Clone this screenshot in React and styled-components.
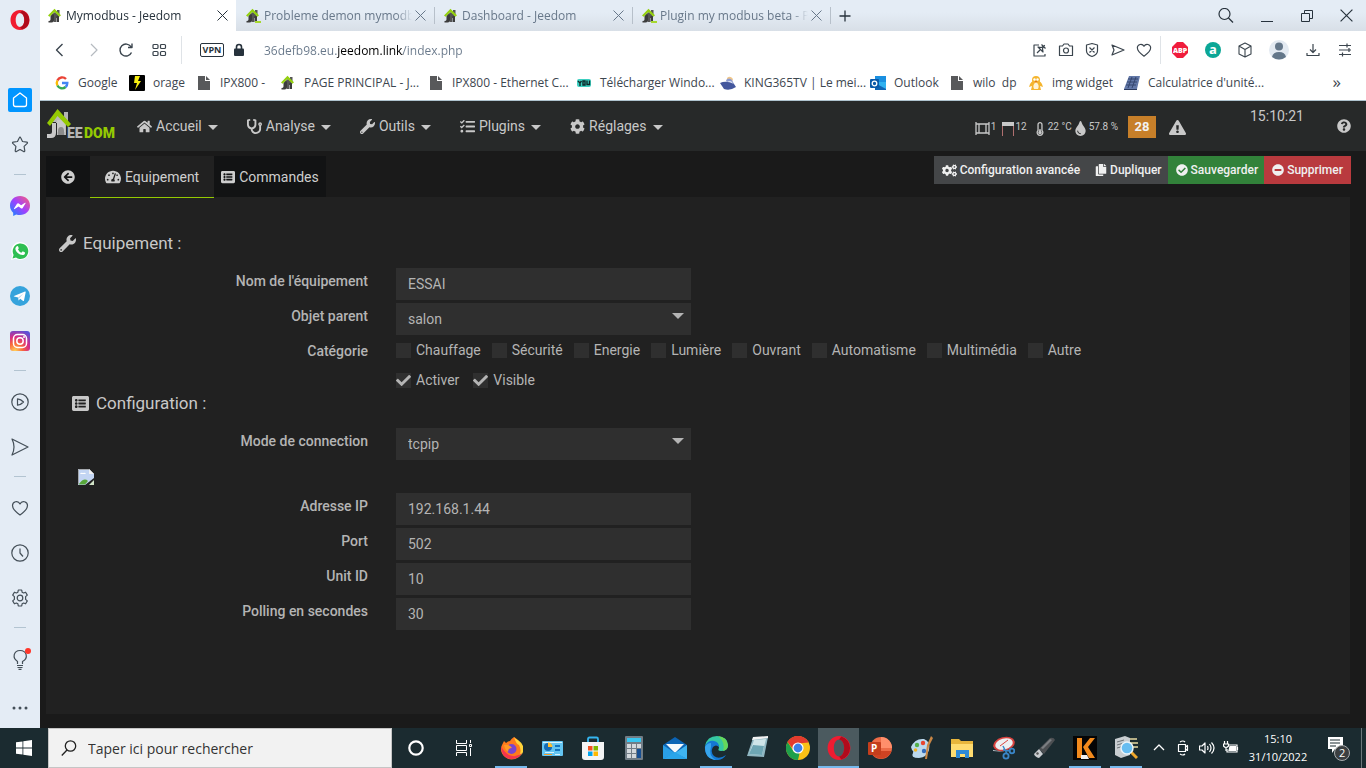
import React, { useState } from "react";
import styled, { createGlobalStyle } from "styled-components";
import {
  FaArrowCircleLeft,
  FaCheck,
  FaCheckCircle,
  FaCog,
  FaCogs,
  FaCopy,
  FaExclamationTriangle,
  FaHome,
  FaListAlt,
  FaMinusCircle,
  FaQuestionCircle,
  FaStethoscope,
  FaTachometerAlt,
  FaTasks,
  FaThermometerQuarter,
  FaTint,
  FaWrench,
} from "react-icons/fa";

const GlobalStyle = createGlobalStyle`
  * {
    box-sizing: border-box;
  }

  body {
    margin: 0;
    font-family: "Open Sans", "Noto Sans", sans-serif;
    font-size: 12px;
  }

  button, input, select {
    margin: 0;
    padding: 0;
    border: none;
    border-radius: 0;
    background: none;
    font: inherit;
    color: inherit;
  }

  button:focus, input:focus, select:focus {
    outline: none;
  }

  a {
    color: inherit;
    text-decoration: none;
  }

  svg {
    display: block;
    flex: none;
  }
`;

const StyledDesktop = styled.div`
  display: flex;
  flex-direction: column;
  min-height: 100vh;
`;

const StyledBrowser = styled.div`
  display: flex;
  flex: 1;
`;

const StyledWindow = styled.div`
  display: flex;
  flex-direction: column;
  flex: 1;
  min-width: 0;
`;

/* Opera sidebar */

const StyledSidebar = styled.aside`
  display: flex;
  flex-direction: column;
  width: 40px;
  background: #e4ecf5;
  color: #444f58;
`;

const StyledSideButton = styled.button`
  display: flex;
  align-items: center;
  justify-content: center;
  height: ${({ $tall }) => ($tall ? "77px" : "45px")};
  padding-bottom: ${({ $tall }) => ($tall ? "37px" : "0")};
`;

const StyledSideLine = styled.div`
  height: 16px;
  padding: 7px 14px 8px;

  &::before {
    content: "";
    display: block;
    height: 1px;
    background: #b3c4d1;
  }
`;

const StyledSideMore = styled.button`
  display: flex;
  align-items: center;
  justify-content: center;
  height: 40px;
  margin-top: auto;
`;

/* Opera tabs and bars */

const StyledTabStrip = styled.div`
  display: flex;
  height: 31px;
  background: linear-gradient(#e4ecf5 40%, #d8dfe7);
  color: #68788a;
`;

const StyledTab = styled.div`
  display: flex;
  align-items: center;
  gap: 3px;
  width: ${({ $active }) => ($active ? "196px" : "198px")};
  padding: 0 8px 0 ${({ $active }) => ($active ? "7px" : "9px")};
  background: ${({ $active }) => ($active ? "white" : "none")};
  color: ${({ $active }) => ($active ? "#27323c" : "#68788a")};
`;

const StyledTabTitle = styled.span`
  flex: 1;
  overflow: hidden;
  white-space: nowrap;
  line-height: 18px;
  mask-image: linear-gradient(to left, transparent, black 16px);
`;

const StyledTabLine = styled.span`
  width: 1px;
  height: 17px;
  margin: 7px -1px 0 0;
  background: #b7c0ca;
`;

const StyledPlus = styled.button`
  display: flex;
  align-items: center;
  padding: 0 9px;
  color: #27323c;
`;

const StyledWindowButtons = styled.div`
  display: flex;
  align-items: center;
  gap: 26px;
  margin-left: auto;
  padding-right: 13px;
  color: #27323c;
`;

const StyledIconButton = styled.button`
  display: flex;
  align-items: center;
  justify-content: center;
`;

const StyledAddressBar = styled.div`
  display: flex;
  align-items: center;
  height: 38px;
  padding: 0 13px 0 12px;
  background: white;
  color: #3b454e;
`;

const StyledButtonGroup = styled.div`
  display: flex;
  align-items: center;
  gap: ${({ $gap }) => $gap}px;
`;

const StyledBarLine = styled.span`
  width: 1px;
  height: 28px;
  margin: 0 ${({ $right }) => $right}px 0 ${({ $left }) => $left}px;
  background: #dfe3e7;
`;

const StyledVpn = styled.button`
  width: 24px;
  height: 14px;
  margin-right: 9px;
  border: 1px solid #27323c;
  border-radius: 2px;
  font-size: 9px;
  font-weight: 700;
  line-height: 12px;
  color: #27323c;
`;

/* the host name is darker than the rest of the address */
const StyledAddress = styled.input`
  flex: 1;
  min-width: 0;
  height: 24px;
  margin-left: 19px;
  color: transparent;
  background: linear-gradient(
    to right,
    #68788a 73px,
    #000 73px,
    #000 139px,
    #68788a 139px
  );
  background-clip: text;
`;

const StyledBookmarks = styled.nav`
  display: flex;
  align-items: center;
  height: 31px;
  padding: 0 25px 3px 14px;
  background: white;
  color: #3d464f;
`;

const StyledBookmark = styled.a`
  display: flex;
  align-items: center;
  gap: 8px;
  margin-right: 12px;
  white-space: pre;
`;

const StyledBookmarkLabel = styled.span`
  width: ${({ $width }) => $width}px;
  line-height: 18px;
`;

const StyledMore = styled.button`
  margin-left: auto;
  padding-bottom: 3px;
  font-size: 17px;
  line-height: 18px;
`;

/* Jeedom page */

const StyledPage = styled.main`
  display: flex;
  flex-direction: column;
  flex: 1;
  border-top: 1px solid #afc3ce;
  background: #1a1a1a;
  font-family: Roboto, sans-serif;
  font-size: 14px;
  color: #b4b4b4;
`;

const StyledNavbar = styled.header`
  display: flex;
  height: 50px;
  padding: 0 15px 0 7px;
  background: #272929;
  color: #c8c8c8;
`;

const StyledLogo = styled.a`
  padding-top: 7px;
  margin-right: 21px;
`;

const StyledMenu = styled.nav`
  display: flex;
  align-items: center;
  gap: 29px;
`;

const StyledMenuButton = styled.button`
  display: flex;
  align-items: center;
  gap: 4px;
  line-height: 20px;

  &::after {
    content: "";
    margin: 3px 0 0 2px;
    border: 5px solid transparent;
    border-top-color: currentColor;
    border-bottom: none;
  }
`;

const StyledStatus = styled.div`
  display: flex;
  align-items: center;
  margin-left: auto;
  padding-top: 2px;
`;

const StyledSensor = styled.span`
  display: flex;
  align-items: center;
  gap: 1px;
  margin: 3px ${({ $right }) => $right}px 0 0;
  font-size: 10px;
  line-height: 12px;

  span {
    margin-bottom: 4px;
  }
`;

const StyledBadge = styled.span`
  width: 28px;
  margin-right: 13px;
  background: #c77f29;
  color: #f2f2f2;
  font-size: 13px;
  font-weight: 700;
  line-height: 22px;
  text-align: center;
`;

const StyledClock = styled.time`
  margin: 5px 33px 0 64px;
  line-height: 20px;
`;

const StyledHelp = styled.button`
  display: flex;
  align-items: center;
`;

/* one pixel of the active tab's border runs over the panel */
const StyledTabsRow = styled.div`
  z-index: 1;
  display: flex;
  justify-content: space-between;
  align-items: flex-start;
  height: 46px;
  padding: 5px 15px 0 6px;
`;

const StyledPageTabs = styled.div`
  display: flex;
  align-items: flex-start;
`;

const StyledPageTab = styled.button`
  display: flex;
  align-items: center;
  gap: 4px;
  height: ${({ $active }) => ($active ? "42px" : "41px")};
  padding: 0 ${({ $wide }) => ($wide ? "15px" : "7px")};
  border-bottom: ${({ $active }) => ($active ? "1px solid #94ca02" : "none")};
  background: ${({ $active }) => ($active ? "#212121" : "#121314")};
  color: #cecece;
  line-height: 20px;
`;

const StyledActions = styled.div`
  display: flex;
`;

const buttonColors = {
  default: "#444648",
  success: "#32823a",
  danger: "#b93a3e",
};

const StyledActionButton = styled.button`
  display: flex;
  align-items: center;
  gap: 3px;
  height: 28px;
  padding: 0 ${({ $right }) => $right}px 0 8px;
  background: ${({ $kind }) => buttonColors[$kind]};
  color: #f0f0f0;
  font-size: 12px;
  font-weight: 500;
`;

const StyledPanel = styled.form`
  flex: 1;
  margin: 0 16px 14px 6px;
  padding: 35px 0 24px;
  background: #212121;
`;

const StyledTitle = styled.h2`
  display: flex;
  align-items: center;
  gap: 7px;
  margin: 0 0 14px ${({ $indent }) => ($indent ? "26px" : "13px")};
  color: #c8c8c8;
  font-size: 17px;
  font-weight: 400;
  line-height: 22px;
`;

const StyledRow = styled.div`
  display: grid;
  grid-template-columns: calc(25% - 4px) ${({ $wide }) =>
      $wide ? "1fr" : "calc(25% - 31px)"};
  column-gap: 28px;
  margin-bottom: 3px;
`;

const StyledLabel = styled.label`
  padding-top: 4px;
  font-weight: 500;
  line-height: 18px;
  text-align: right;
`;

const StyledInput = styled.input`
  width: 100%;
  height: 32px;
  padding: 0 12px;
  background: #2f2f2f;
`;

const StyledSelectBox = styled.div`
  position: relative;

  &::after {
    content: "";
    position: absolute;
    top: 10px;
    right: 7px;
    border: 6px solid transparent;
    border-top-color: #b4b4b4;
    border-bottom: none;
    pointer-events: none;
  }
`;

const StyledSelect = styled.select`
  width: 100%;
  height: 32px;
  padding: 0 12px;
  appearance: none;
  background: #2f2f2f;
`;

const StyledChecks = styled.div`
  display: flex;
  flex-wrap: wrap;
  align-items: center;
  gap: ${({ $gap }) => $gap}px;
  min-height: 24px;
  margin-bottom: ${({ $last }) => ($last ? "-3px" : "3px")};
`;

const StyledCheckLabel = styled.label`
  display: flex;
  align-items: center;
  gap: 5px;
  line-height: 20px;
`;

const StyledCheckBox = styled.span`
  display: grid;
  width: 15px;
  height: 15px;
  background: #2f2f2f;

  > * {
    grid-area: 1 / 1;
  }

  svg {
    pointer-events: none;
  }
`;

const StyledCheck = styled.input`
  width: 15px;
  height: 15px;
  appearance: none;
`;

const StyledPicture = styled.div`
  padding: 6px 0 8px 32px;
`;

/* Windows taskbar */

const StyledTaskbar = styled.footer`
  display: flex;
  height: 40px;
  background: #1b2b30;
  color: white;
`;

const StyledStart = styled.button`
  display: flex;
  align-items: center;
  justify-content: center;
  width: 48px;
`;

const StyledSearch = styled.label`
  display: flex;
  flex: none;
  align-items: center;
  gap: 11px;
  width: 344px;
  padding-left: 12px;
  border: 1px solid #c5c5c5;
  background: #f2f2f2;
  color: #222;
`;

const StyledSearchInput = styled.input`
  flex: 1;
  min-width: 0;
  font-size: 14px;

  &::placeholder {
    color: #333;
    opacity: 1;
  }
`;

const StyledApps = styled.div`
  display: flex;
  margin-left: 2px;
`;

const StyledApp = styled.button`
  display: flex;
  flex: none;
  flex-direction: column;
  align-items: center;
  justify-content: space-between;
  width: ${({ $wide }) => ($wide ? "48px" : "41px")};
  padding-top: 8px;
  background: ${({ $active }) => ($active ? "#4b5a5f" : "none")};

  &::after {
    content: "";
    width: ${({ $active }) => ($active ? "100%" : "32px")};
    height: 2px;
    background: ${({ $open }) => ($open ? "#76b9ed" : "none")};
  }
`;

const StyledTray = styled.div`
  display: flex;
  align-items: center;
  gap: 8px;
  margin-left: auto;
`;

const StyledDate = styled.div`
  width: 62px;
  font-size: 11px;
  line-height: 18px;
  text-align: center;
  white-space: nowrap;
`;

const StyledNotifications = styled.button`
  margin: 2px 0 0 10px;
`;

const StyledDesktopEdge = styled.div`
  align-self: stretch;
  width: 5px;
  border-left: 1px solid #6c777b;
`;

const Line = ({ size = 18, box = 18, width = 1, children }) => (
  <svg
    width={size}
    height={size}
    viewBox={`0 0 ${box} ${box}`}
    fill="none"
    stroke="currentColor"
    strokeWidth={width}
    strokeLinejoin="round"
  >
    {children}
  </svg>
);

const House = ({ forum }) => (
  <svg width="16" height="16" viewBox="0 0 16 16">
    <path d="M10 2h2.500v5H10zM4.500 6.500 8 4l3.500 3v3H9v4H7z" fill="#555" />
    <path d="M5 6.500h2V12q0 2.500-2.500 2.500H1.500V13q2 0 2-1.500V8zM9.500 8h2.500v6H9.500z" fill="#3c3c3c" />
    <path d="M1 7.500 7.500.8l6.500 6.400-1.600 1.500L7.500 4 2.600 8.800z" fill="#94d010" />
    {forum && <path d="M10 13h6v2h-6z" fill="#a6d82e" />}
  </svg>
);

const Close = ({ size = 11 }) => (
  <Line size={size} box={11}>
    <path d="m.5.5 10 10m0-10-10 10" />
  </Line>
);

const OperaLogo = ({ size = 20 }) => (
  <svg width={size} height={size} viewBox="0 0 20 20">
    <path
      d="M10 0C4.600 0 .5 4.200.5 10S4.600 20 10 20s9.500-4.200 9.500-10S15.400 0 10 0zm0 3c2.500 0 4.300 3 4.300 7s-1.800 7-4.300 7-4.300-3-4.300-7S7.500 3 10 3z"
      fill="#f01c31"
      fillRule="evenodd"
    />
    <path d="M12 .4A10 10 0 0 1 12 19.600L10 17c2.500 0 4.300-3 4.300-7S12.500 3 10 3z" fill="#b00b1c" />
  </svg>
);

const FileIcon = () => (
  <svg width="16" height="16" viewBox="0 0 16 16" fill="#58595b">
    <path d="M2 1h7v5h5v9H2zM10 1l4 4h-4z" />
  </svg>
);

const HeartPath = () => (
  <path d="M9 16C4 12.500 1.500 10 1.500 6.600 1.500 2.500 7 1 9 4.900c2-3.900 7.500-2.400 7.500 1.700C16.500 10 14 12.500 9 16z" />
);

const GearPath = () => (
  <>
    <path d="M7.300 1h3.400l.4 2.200 1.500.8 2-.8 1.700 2.900-1.700 1.500v2.800l1.700 1.500-1.700 2.900-2-.8-1.500.8-.4 2.200H7.300l-.4-2.200-1.500-.8-2 .8-1.700-2.900 1.700-1.500V7.600L1.700 6.100l1.700-2.900 2 .8 1.500-.8z" />
    <circle cx="9" cy="9" r="2.800" />
  </>
);

const Logo = () => (
  <svg width="69" height="34" viewBox="0 0 69 34">
    <path d="M17 4h4v9h-4z" fill="#b5b5b5" />
    <path d="M3 14 11 6l8 8v13H9V14z" fill="#b9b9b9" />
    <path d="M10 12h8v12h-8z" fill="#c8c8c8" />
    <path d="M11 23q0-4 3-4t3 4v4h-6z" fill="#8b8b8b" />
    <path d="M5 15h4v10q0 5-5 5H0v-4h3q2 0 2-2z" fill="#c8c8c8" />
    <path d="M9 15h1v12H9zM4 14h5v1H4z" fill="#272929" />
    <path d="M0 15 10.500 1 24 16l-3 3L10.500 8 3 18z" fill="#94ca02" />
    <g fontFamily="Roboto" fontWeight="900" fontSize="14">
      <text x="20" y="30" fill="#b5b5b5">EE</text>
      <text x="37" y="30" fill="#94ca02">DOM</text>
    </g>
  </svg>
);

const Messenger = () => (
  <svg width="20" height="20" viewBox="0 0 20 20">
    <defs>
      <linearGradient id="messenger" x1="0" y1="1" x2="1" y2="0">
        <stop offset="0" stopColor="#0a8cff" />
        <stop offset=".5" stopColor="#a040ff" />
        <stop offset="1" stopColor="#ff6070" />
      </linearGradient>
    </defs>
    <path d="M10 0C4.400 0 0 4.100 0 9.600c0 3 1.200 5.400 3.200 7.100V20l3-1.600c1.200.5 2.500.6 3.800.6 5.600 0 10-4 10-9.500S15.600 0 10 0z" fill="url(#messenger)" />
    <path d="m4 12.500 3-4.700q.8-1 1.800-.3l2.300 1.700 3.900-2.400q1-.3.6.5l-2.900 4.600q-.8 1-1.800.3L8.600 10.500l-3.900 2.600q-.9.200-.7-.6z" fill="white" />
  </svg>
);

const WhatsApp = () => (
  <svg width="20" height="20" viewBox="0 0 20 20">
    <path d="m1 19 1.300-4.700A9 9 0 1 1 5.700 17.800z" fill="white" />
    <path d="m2.500 17.500 1.100-3.600A7.800 7.800 0 1 1 6 16.600z" fill="#2fbf52" />
    <path d="M7 5.200c.6-.3 1 0 1.100.4l.6 1.500q.1.400-.7 1.300 1.200 2.400 3.400 3.300l1-1.100q.3-.3.7-.1l1.600.8c.7.4.1 2-.7 2.400C10.600 15.200 5 10.800 5.400 7.400c.1-.9.8-1.900 1.600-2.200z" fill="white" />
  </svg>
);

const Telegram = () => (
  <svg width="20" height="20" viewBox="0 0 20 20">
    <circle cx="10" cy="10" r="10" fill="#35a3dc" />
    <path d="M4 9.900 15 5.500q.9-.2.700.8L14 14.400q-.3 1-1.200.4l-2.600-2-1.600 1.600-.5-3L4 10.500q-.5-.3 0-.6z" fill="white" />
    <path d="m8 11.500 5.500-4-4.500 5-.4 1.900z" fill="#b8d8ee" />
  </svg>
);

const Instagram = () => (
  <svg width="20" height="20" viewBox="0 0 20 20">
    <defs>
      <radialGradient id="instagram" cx=".25" cy="1" r="1.100">
        <stop offset="0" stopColor="#ffd35a" />
        <stop offset=".35" stopColor="#f9673b" />
        <stop offset=".65" stopColor="#d62c86" />
        <stop offset="1" stopColor="#5b51d8" />
      </radialGradient>
    </defs>
    <rect width="20" height="20" rx="3" fill="url(#instagram)" />
    <rect x="3.500" y="3.500" width="13" height="13" rx="4" fill="none" stroke="white" strokeWidth="1.500" />
    <circle cx="10" cy="10" r="3.200" fill="none" stroke="white" strokeWidth="1.500" />
    <circle cx="14" cy="6" r="1" fill="white" />
  </svg>
);

const sideItems = [
  {
    name: "Speed Dial",
    icon: (
      <svg width="24" height="24" viewBox="0 0 24 24">
        <rect width="24" height="24" rx="2" fill="#0095ff" />
        <path d="m12 5 6.500 5v6.500q0 2-2 2h-9q-2 0-2-2V10z" fill="none" stroke="white" strokeWidth="1.300" strokeLinejoin="round" />
      </svg>
    ),
  },
  {
    name: "Favoris",
    icon: (
      <Line width={1.2}>
        <path d="M9 1.200q.5 0 .8.700l1.700 3.600 4.300.6q1.200.3.400 1.300l-3.100 3 .7 4.400q0 1.200-1.200.8L9 13.500l-3.600 2.100q-1.200.4-1.200-.8l.7-4.400-3.100-3q-.8-1 .4-1.300l4.300-.6 1.700-3.600q.3-.7.800-.7z" />
      </Line>
    ),
  },
  null,
  { name: "Messenger", icon: <Messenger /> },
  { name: "WhatsApp", icon: <WhatsApp /> },
  { name: "Telegram", icon: <Telegram /> },
  { name: "Instagram", icon: <Instagram /> },
  null,
  {
    name: "Lecteur",
    icon: (
      <Line width={1.2}>
        <circle cx="9" cy="9" r="8.200" />
        <path d="M6.500 5.800v6.400q3.500-.5 6-3.200-2.500-2.700-6-3.200z" />
      </Line>
    ),
  },
  {
    name: "Mon Flow",
    icon: (
      <Line width={1.2}>
        <path d="m1 1 16 8-16 8q4-8 0-16z" />
      </Line>
    ),
  },
  null,
  { name: "Signets", icon: <Line width={1.2}><HeartPath /></Line> },
  {
    name: "Historique",
    icon: (
      <Line width={1.2}>
        <circle cx="9" cy="9" r="8.200" />
        <path d="M9 4.500V9l3 3.500" />
      </Line>
    ),
  },
  { name: "Paramètres", icon: <Line width={1.2}><GearPath /></Line> },
  null,
  {
    name: "Conseils",
    icon: (
      <svg width="22" height="22" viewBox="0 0 22 22" fill="none" stroke="#444f58" strokeWidth="1.200">
        <path d="M8.500 16v-2.500C3 10 4.500 2.600 11 2.500s9 7.500 2.500 11V16M8 17.500h6M8.500 19.500h5M9.500 21.300h3" />
        <circle cx="19" cy="3" r="3" fill="#ff3528" stroke="none" />
      </svg>
    ),
  },
];

const openTabs = [
  { title: "Mymodbus - Jeedom", active: true },
  { title: "Probleme demon mymodbus", forum: true },
  { title: "Dashboard - Jeedom" },
  { title: "Plugin my modbus beta - Plugins", forum: true },
];

const bookmarks = [
  {
    name: "Google",
    width: 39,
    icon: (
      <svg width="16" height="16" viewBox="0 0 16 16" fill="none" strokeWidth="2.400">
        <path d="M12 4A5.300 5.300 0 0 0 3.400 5.500" stroke="#ea4335" />
        <path d="M3.400 5.500a5.300 5.300 0 0 0 0 5" stroke="#fbbc05" />
        <path d="M3.400 10.500a5.300 5.300 0 0 0 8.200 1.500" stroke="#34a853" />
        <path d="M8 8h5.300a5.300 5.300 0 0 1-1.700 4" stroke="#4285f4" />
      </svg>
    ),
  },
  {
    name: "orage",
    width: 31,
    icon: (
      <svg width="16" height="16" viewBox="0 0 16 16">
        <rect width="16" height="16" rx="1" fill="black" />
        <path d="M6 1h5L9 6h3l-6 9 2-7H5z" fill="#f7ee12" />
      </svg>
    ),
  },
  { name: "IPX800 -", width: 48, icon: <FileIcon /> },
  { name: "PAGE PRINCIPAL - J...", width: 112, icon: <House /> },
  { name: "IPX800 - Ethernet C...", width: 112, icon: <FileIcon /> },
  {
    name: "Télécharger Windo...",
    width: 108,
    icon: (
      <svg width="16" height="16" viewBox="0 0 16 16">
        <rect x="1" y="4" width="14" height="8" rx="2" fill="#3dcfc0" />
        <path d="m2 6 2 2 1.500-2M4 8v3M7 6h2v4H7zM11 5.500v4h2.500v-4" fill="none" stroke="#102a2a" strokeWidth="1.400" />
      </svg>
    ),
  },
  {
    name: "KING365TV | Le mei...",
    width: 114,
    icon: (
      <svg width="16" height="16" viewBox="0 0 16 16">
        <path d="M7 3q3-3 6 1l-1 3H7z" fill="#eec58a" />
        <path d="M6 5q3-3 6 0l2 4-6 2z" fill="#8d9bd0" />
        <path d="M7 7q3-2 5 0l1 2-5 1z" fill="#dfe4f4" />
        <path d="M0 8q6-3 14 1l2 3q-6 4-12 2z" fill="#44579d" />
      </svg>
    ),
  },
  {
    name: "Outlook",
    width: 43,
    icon: (
      <svg width="16" height="16" viewBox="0 0 16 16">
        <path d="M5 1h11v8H5z" fill="#1a8fe0" />
        <path d="M5 7h11v8H5z" fill="#2fb1f0" />
        <path d="m5 8 11 6v1H5z" fill="#0f64b4" />
        <rect y="4" width="9" height="9" rx="1" fill="#0b59a8" />
        <circle cx="4.500" cy="8.500" r="2.300" fill="none" stroke="white" strokeWidth="1.300" />
      </svg>
    ),
  },
  { name: "wilo  dp", width: 43, icon: <FileIcon /> },
  {
    name: "img widget",
    width: 60,
    icon: (
      <svg width="16" height="16" viewBox="0 0 16 16">
        <circle cx="8" cy="5" r="4" fill="#f5b52e" />
        <path d="M8 5q6 1 7 7l-3-1 1 4H3l1-4-3 1q1-6 7-7z" fill="#f5b52e" />
        <path d="M8 7q4 3 2 7H6q-2-4 2-7z" fill="#fff3d4" />
        <circle cx="6.500" cy="4.500" r="1.200" fill="white" />
        <circle cx="9.500" cy="4.500" r="1.200" fill="white" />
        <path d="M6.500 6h3L8 8z" fill="#e0761a" />
      </svg>
    ),
  },
  {
    name: "Calculatrice d'unité...",
    width: 110,
    icon: (
      <svg width="16" height="16" viewBox="0 0 16 16">
        <path d="M5 1h11l-3 13H0z" fill="#6278a8" />
        <path d="M0 14h13v1H0z" fill="#2b3a5e" />
        <path d="M4 4h10M3 7h10M2 10h10M8 2 4 13M12 2 8 13" stroke="#35466f" />
      </svg>
    ),
  },
];

const menuItems = [
  { name: "Accueil", Icon: FaHome },
  { name: "Analyse", Icon: FaStethoscope },
  { name: "Outils", Icon: FaWrench },
  { name: "Plugins", Icon: FaTasks },
  { name: "Réglages", Icon: FaCog },
];

const categories = [
  "Chauffage",
  "Sécurité",
  "Energie",
  "Lumière",
  "Ouvrant",
  "Automatisme",
  "Multimédia",
  "Autre",
];

const tcpFields = [
  { id: "ip", label: "Adresse IP", value: "192.168.1.44" },
  { id: "port", label: "Port", value: "502" },
  { id: "unit", label: "Unit ID", value: "10" },
  { id: "polling", label: "Polling en secondes", value: "30" },
];

const apps = [
  {
    name: "Firefox",
    open: true,
    icon: (
      <>
        <path d="M15 1q5 3 5.500 7Q26 15 20 21q-8 5-14 0-7-6-2-14l1-2 2 2q2-2 4-2 1-2 4-4z" fill="#ff7a1c" />
        <path d="M15 1q2 7 5 8 4 8-2 12 8-2 6-11-2-4-5-6-3-1-4-3z" fill="#ffd43a" />
        <path d="M2 10q0 12 10 13 8 0 11-6-6 5-13 2-5-3-8-9z" fill="#f4344e" />
        <circle cx="12.500" cy="13" r="5" fill="#7a45cf" />
        <path d="M5 9q5-1 8 3-4 0-4 4-3-2-4-7z" fill="#ff9a26" />
      </>
    ),
  },
  {
    name: "Panneau de configuration",
    icon: (
      <>
        <rect x="2" y="5" width="21" height="15" rx="1" fill="#63c5f2" />
        <path d="M3 6h19v1H3zM5 16h9v1H5zM15 18h5v1h-5z" fill="#d9f2fd" />
        <circle cx="8" cy="11" r="4" fill="#156bb3" />
        <path d="M8 11V6.500A4.500 4.500 0 0 1 12.500 11z" fill="#ffbe2e" />
        <path d="M15 9h5v2h-5zM15 13h5v2h-5z" fill="#1273bd" />
        <path d="M4 18h8v1H4z" fill="#f39a26" />
      </>
    ),
  },
  {
    name: "Microsoft Store",
    icon: (
      <>
        <path d="M7 7V3q0-1.500 1.500-1.500h7Q17 1.500 17 3v4" fill="none" stroke="#35b5ef" strokeWidth="1.800" />
        <path d="M1 6h22v15q0 3-3 3H4q-3 0-3-3z" fill="#f4f4f4" />
        <path d="M7 10h4.500v4.500H7z" fill="#f25022" />
        <path d="M12.500 10H17v4.500h-4.500z" fill="#7fba00" />
        <path d="M7 15.500h4.500V20H7z" fill="#00a4ef" />
        <path d="M12.500 15.500H17V20h-4.500z" fill="#ffb900" />
      </>
    ),
  },
  {
    name: "Calculatrice",
    icon: (
      <>
        <rect x="3" width="18" height="24" rx="1" fill="#717d86" />
        <path d="M5 2h14v4H5z" fill="#39c6f0" />
        <path d="M5 8h4v4H5zM10 8h4v4h-4zM15 8h4v4h-4zM5 13h4v4H5zM10 13h4v4h-4zM5 18h4v4H5zM10 18h4v4h-4z" fill="#d3d8dc" />
        <path d="M15 13h4v9h-4z" fill="#174f91" />
      </>
    ),
  },
  {
    name: "Courrier",
    icon: (
      <>
        <path d="M0 9 12 1l12 8v14H0z" fill="#0b64b5" />
        <path d="M3 8h18l-9 9z" fill="#f4f8fb" />
        <path d="m0 9 12 8-12 6z" fill="#2a9fe6" />
        <path d="m24 9-12 8 12 6z" fill="#3fb4f0" />
        <path d="m0 23 12-7 12 7z" fill="#2aa5ea" />
      </>
    ),
  },
  {
    name: "Edge",
    open: true,
    icon: (
      <>
        <path d="M1 10Q3 0 13 0q11 1 11 9 0 6-7 6-4 0-2-3 0-5-6-5-5 0-8 3z" fill="#35c7a2" />
        <path d="M1 10Q4 4 10 5q5 1 5 6-3-3-6 0-3 5 1 9 5 4 12-1-4 6-12 5Q0 21 1 10z" fill="#1478d4" />
        <path d="M7 11Q4 20 12 24 1 23 1 11q2-4 6-4z" fill="#37a5ec" />
        <path d="M14 0q9 1 10 9 0 5-5 6 3-8-5-15z" fill="#66d85b" />
      </>
    ),
  },
  {
    name: "Bloc-notes",
    icon: (
      <>
        <path d="m8 2 15-1-4 20-17-1z" fill="#8fb6c1" />
        <path d="m9 4 12-1-4 16-13-1z" fill="#cfe5e9" />
        <path d="M8 9 4 18l13 1 2-9z" fill="#6ea6b4" />
        <path d="m8 1 15-1v2L7 4z" fill="#f2f2f2" />
      </>
    ),
  },
  {
    name: "Chrome",
    icon: (
      <>
        <circle cx="12" cy="12" r="12" fill="#fbc116" />
        <path d="M1.600 6A12 12 0 0 1 22.400 6L12 8z" fill="#e33b2e" />
        <path d="M1.600 6 8 16l5.500 1.500L12 24A12 12 0 0 1 1.600 6z" fill="#1fa04b" />
        <path d="M1.600 6A12 12 0 0 1 22.400 6.500H12L7 13z" fill="#e33b2e" />
        <circle cx="12" cy="12" r="5.600" fill="white" />
        <circle cx="12" cy="12" r="4.400" fill="#3d7fe8" />
      </>
    ),
  },
  { name: "Opera", open: true, active: true },
  {
    name: "PowerPoint",
    icon: (
      <>
        <circle cx="13" cy="12" r="11" fill="#ed6c47" />
        <path d="M13 12V1a11 11 0 0 1 11 11z" fill="#ff8f6b" />
        <path d="M2.500 15h21a11 11 0 0 1-21 0z" fill="#cf4322" />
        <rect y="6" width="13" height="13" rx="1" fill="#c43e1c" />
        <text x="3" y="16" fontFamily="Open Sans" fontSize="10" fontWeight="700" fill="white">P</text>
      </>
    ),
  },
  {
    name: "Paint",
    icon: (
      <>
        <path d="M2 11Q6 2 15 3q7 3 5 11-2 7-10 8-9 0-6-5 1-2-1-3z" fill="#bcd9ee" />
        <circle cx="8" cy="9" r="2.200" fill="#53b04b" />
        <circle cx="14" cy="7" r="2.200" fill="#e8452f" />
        <circle cx="6.500" cy="14" r="1.800" fill="#f0b323" />
        <circle cx="15" cy="15" r="2.200" fill="#3169b8" />
        <path d="m22 0 2 2-4 8-2 13h-2l2-14z" fill="#c98745" />
      </>
    ),
  },
  {
    name: "Explorateur de fichiers",
    icon: (
      <>
        <path d="M1 3h8l2 2h12v16H1z" fill="#e8b63c" />
        <path d="M1 8h22v13H1z" fill="#ffdc70" />
        <path d="M6 14h13v8h-4v-4h-5v4H6z" fill="#2f8ad6" />
      </>
    ),
  },
  {
    name: "Outil Capture",
    icon: (
      <>
        <ellipse cx="13" cy="8" rx="11" ry="7" fill="#d9433f" transform="rotate(-15 13 8)" />
        <ellipse cx="13" cy="8" rx="9" ry="5.500" fill="#eceff1" transform="rotate(-15 13 8)" />
        <path d="m9 10 8-6" stroke="#d9433f" />
        <path d="m2 14 12 2-12-1z" fill="#b9c2c8" />
        <circle cx="15" cy="20" r="2.600" fill="none" stroke="#3a86c8" strokeWidth="1.800" />
        <circle cx="21" cy="15" r="2.300" fill="none" stroke="#3a86c8" strokeWidth="1.800" />
        <path d="m12 10 4 8M12 14l7 1" stroke="#3a86c8" strokeWidth="1.500" />
      </>
    ),
  },
  {
    name: "Clé USB",
    icon: (
      <>
        <path d="M7 13 18 2q4-1 5 2L12 18z" fill="#4c4f52" />
        <path d="m9 12 9-9 2 1-9 9z" fill="#7b7e81" />
        <path d="m2 18 5-5 4 5-4 4q-4-1-5-4z" fill="#c9cccf" />
        <path d="m4 17 2-1 1 2-2 1z" fill="#555" />
      </>
    ),
  },
  {
    name: "K",
    open: true,
    icon: (
      <>
        <path d="M0 0h24v24H0z" fill="#050505" />
        <path d="M4 2h5v20H4z" fill="#f28a1c" />
        <path d="M17 2h5l-7 9 7 11h-6L10 11z" fill="#f28a1c" />
        <path d="M8 19h6l2 4H8z" fill="#f1f1f1" />
      </>
    ),
  },
  {
    name: "Analyse réseau",
    open: true,
    icon: (
      <>
        <path d="m1 3 10-3 5 2v17l-9 3-6-3z" fill="#c8cdd0" />
        <path d="m3 6 7-2M3 9l7-2M3 12l7-2" stroke="#6d7478" />
        <path d="M16 3h7M16 7h8M18 11h6" stroke="#e7dba3" strokeWidth="1.500" />
        <path d="m17 16 6 6" stroke="#efa72c" strokeWidth="3" />
        <circle cx="13" cy="12" r="6" fill="#67bdf0" stroke="#e9f4fa" strokeWidth="1.500" />
      </>
    ),
  },
];

const Sidebar = () => (
  <StyledSidebar>
    <StyledSideButton $tall aria-label="Menu Opera">
      <OperaLogo />
    </StyledSideButton>
    {sideItems.map((item, i) =>
      item ? (
        <StyledSideButton key={i} aria-label={item.name}>
          {item.icon}
        </StyledSideButton>
      ) : (
        <StyledSideLine key={i} />
      )
    )}
    <StyledSideMore aria-label="Plus">
      <svg width="16" height="4" viewBox="0 0 16 4" fill="#444f58">
        <circle cx="2" cy="2" r="1.500" />
        <circle cx="8" cy="2" r="1.500" />
        <circle cx="14" cy="2" r="1.500" />
      </svg>
    </StyledSideMore>
  </StyledSidebar>
);

const TabStrip = () => (
  <StyledTabStrip>
    {openTabs.map((tab) => (
      <React.Fragment key={tab.title}>
        <StyledTab $active={tab.active}>
          <House forum={tab.forum} />
          <StyledTabTitle>{tab.title}</StyledTabTitle>
          <StyledIconButton aria-label="Fermer l'onglet">
            <Close />
          </StyledIconButton>
        </StyledTab>
        {!tab.active && <StyledTabLine />}
      </React.Fragment>
    ))}
    <StyledPlus aria-label="Nouvel onglet">
      <Line size={12} box={12} width={1.3}>
        <path d="M6 .5v11M.5 6h11" />
      </Line>
    </StyledPlus>
    <StyledWindowButtons>
      <StyledIconButton aria-label="Rechercher">
        <Line size={16} box={16} width={1.2}>
          <circle cx="6.500" cy="6" r="5.500" />
          <path d="m10.500 10 4.500 4.500" />
        </Line>
      </StyledIconButton>
      <StyledIconButton aria-label="Réduire">
        <Line size={14} box={14}>
          <path d="M1 12.500h12" />
        </Line>
      </StyledIconButton>
      <StyledIconButton aria-label="Restaurer">
        <Line size={14} box={14}>
          <path d="M1.500 4.500h8v8h-8zM4.500 4V1.500h8v8H10" />
        </Line>
      </StyledIconButton>
      <StyledIconButton aria-label="Fermer">
        <Close size={13} />
      </StyledIconButton>
    </StyledWindowButtons>
  </StyledTabStrip>
);

const AddressBar = () => (
  <StyledAddressBar>
    <StyledButtonGroup $gap={17}>
      <StyledIconButton aria-label="Précédent">
        <Line size={16} box={16} width={1.4}>
          <path d="M10.500 2 4.500 8l6 6" />
        </Line>
      </StyledIconButton>
      <StyledIconButton aria-label="Suivant">
        <Line size={16} box={16} width={1.2}>
          <path d="m6 2 6 6-6 6" stroke="#b5bac0" />
        </Line>
      </StyledIconButton>
      <StyledIconButton aria-label="Recharger">
        <Line size={16} box={16} width={1.4}>
          <path d="M13.500 10.500a6 6 0 1 1-.5-5.800M14 1.500V5.500h-4" />
        </Line>
      </StyledIconButton>
      <StyledIconButton aria-label="Accès rapide">
        <Line size={16} box={16} width={1.2}>
          <rect x="2" y="2.500" width="5" height="4" rx="1" />
          <rect x="9.500" y="2.500" width="5" height="4" rx="1" />
          <rect x="2" y="9.500" width="5" height="4" rx="1" />
          <rect x="9.500" y="9.500" width="5" height="4" rx="1" />
        </Line>
      </StyledIconButton>
    </StyledButtonGroup>
    <StyledBarLine $left={14} $right={18} />
    <StyledVpn>VPN</StyledVpn>
    <svg width="12" height="14" viewBox="0 0 12 14">
      <path d="M3.500 6V4q0-2.500 2.500-2.500T8.500 4v2" fill="none" stroke="#27323c" strokeWidth="1.600" />
      <rect x="1" y="5.500" width="10" height="7.500" rx="1" fill="#27323c" />
    </svg>
    <StyledAddress
      aria-label="Adresse"
      defaultValue="36defb98.eu.jeedom.link/index.php"
      spellCheck={false}
    />
    <StyledButtonGroup $gap={10}>
      <StyledIconButton aria-label="Épingler">
        <Line size={16} box={16} width={1.2}>
          <path d="M7 3H2v11h11v-2M5 11l3-3M9.500 2.500l4 4M12.500 3.500l-2 3 .5 3.500-5-5 3.500.5z" />
        </Line>
      </StyledIconButton>
      <StyledIconButton aria-label="Capture">
        <Line size={16} box={16} width={1.2}>
          <path d="M1.500 4H4.500L6 2h4l1.500 2h3v9.500h-13z" />
          <circle cx="8" cy="8.500" r="2.500" />
        </Line>
      </StyledIconButton>
      <StyledIconButton aria-label="Bloqueur">
        <Line size={16} box={16} width={1.2}>
          <path d="M2.500 3 8 1.500 13.500 3v6q0 3.500-5.500 5.500Q2.500 12.500 2.500 9zM5.500 5.500l5 5m0-5-5 5" />
        </Line>
      </StyledIconButton>
      <StyledIconButton aria-label="Flow">
        <Line size={16} box={16} width={1.2}>
          <path d="m2 3 12 5-12 5 2-5z" />
        </Line>
      </StyledIconButton>
      <StyledIconButton aria-label="Ajouter aux signets">
        <Line size={16} width={1.3}><HeartPath /></Line>
      </StyledIconButton>
    </StyledButtonGroup>
    <StyledBarLine $left={8} $right={10} />
    <StyledButtonGroup $gap={16}>
      <StyledIconButton aria-label="Adblock Plus">
        <svg width="18" height="16" viewBox="0 0 18 16">
          <path d="M6 0h6l5 5v6l-5 5H6l-5-5V5z" fill="#f01c3c" />
          <text x="2" y="11" fontFamily="Open Sans" fontSize="7" fontWeight="800" fill="white">ABP</text>
        </svg>
      </StyledIconButton>
      <StyledIconButton aria-label="Alexa">
        <svg width="16" height="16" viewBox="0 0 16 16">
          <circle cx="8" cy="8" r="8" fill="#0ba796" />
          <text x="4" y="12" fontFamily="Open Sans" fontSize="13" fontWeight="700" fill="white">a</text>
        </svg>
      </StyledIconButton>
      <StyledIconButton aria-label="Extensions">
        <Line size={16} box={16} width={1.1}>
          <path d="m8 1 6 3v8l-6 3-6-3V4zM2 4l6 3.500L14 4M8 7.500V15" />
        </Line>
      </StyledIconButton>
      <StyledIconButton aria-label="Profil">
        <svg width="20" height="20" viewBox="0 0 20 20">
          <circle cx="10" cy="10" r="10" fill="#e3eaf2" />
          <circle cx="10" cy="6.500" r="4" fill="#64778a" />
          <path d="M3 17q1-5 7-5t7 5q-7 5-14 0z" fill="#64778a" />
        </svg>
      </StyledIconButton>
      <StyledIconButton aria-label="Téléchargements">
        <Line size={16} box={16} width={1.2}>
          <path d="M8 2v8.500M5 7.500l3 3 3-3M2 11v2.500h12V11" />
        </Line>
      </StyledIconButton>
      <StyledIconButton aria-label="Configuration facile">
        <Line size={16} box={16} width={1.2}>
          <path d="M2 3.500h12M2 8h12M2 12.500h12M10 1.500v4M12 6v4M5.500 10.500v4" />
        </Line>
      </StyledIconButton>
    </StyledButtonGroup>
  </StyledAddressBar>
);

const Bookmarks = () => (
  <StyledBookmarks>
    {bookmarks.map((item) => (
      <StyledBookmark key={item.name} href="#">
        {item.icon}
        <StyledBookmarkLabel $width={item.width}>{item.name}</StyledBookmarkLabel>
      </StyledBookmark>
    ))}
    <StyledMore aria-label="Plus de signets">»</StyledMore>
  </StyledBookmarks>
);

const Navbar = () => (
  <StyledNavbar>
    <StyledLogo href="#" aria-label="Jeedom">
      <Logo />
    </StyledLogo>
    <StyledMenu>
      {menuItems.map(({ name, Icon }) => (
        <StyledMenuButton key={name}>
          <Icon size={15} />
          {name}
        </StyledMenuButton>
      ))}
    </StyledMenu>
    <StyledStatus>
      <StyledSensor $right={6}>
        <Line size={15} box={15} width={1.3}>
          <path d="M1 1v13M14 1v13M1 3h13M1 12h13M4 3v9M11 3v9" />
        </Line>
        <span>1</span>
      </StyledSensor>
      <StyledSensor $right={6}>
        <svg width="12" height="14" viewBox="0 0 12 14">
          <path d="M0 0h12v4H0z" fill="#c8c8c8" />
          <path d="M.5 4v10M11.500 4v10" stroke="#b07070" />
        </svg>
        <span>12</span>
      </StyledSensor>
      <StyledSensor $right={1}>
        <FaThermometerQuarter size={14} />
        <span>22 °C</span>
      </StyledSensor>
      <StyledSensor $right={10}>
        <FaTint size={15} />
        <span>57.8 %</span>
      </StyledSensor>
      <StyledBadge>28</StyledBadge>
      <FaExclamationTriangle size={17} />
    </StyledStatus>
    <StyledClock>15:10:21</StyledClock>
    <StyledHelp aria-label="Aide">
      <FaQuestionCircle size={14} />
    </StyledHelp>
  </StyledNavbar>
);

const CheckField = ({ name, defaultChecked = false }) => {
  const [checked, setChecked] = useState(defaultChecked);

  return (
    <StyledCheckLabel>
      <StyledCheckBox>
        <StyledCheck
          type="checkbox"
          checked={checked}
          onChange={(e) => setChecked(e.target.checked)}
        />
        {checked && <FaCheck size={15} />}
      </StyledCheckBox>
      {name}
    </StyledCheckLabel>
  );
};

const Equipment = () => (
  <StyledPanel>
    <StyledTitle>
      <FaWrench size={17} />
      Equipement :
    </StyledTitle>
    <StyledRow>
      <StyledLabel htmlFor="name">Nom de l'équipement</StyledLabel>
      <StyledInput id="name" defaultValue="ESSAI" />
    </StyledRow>
    <StyledRow>
      <StyledLabel htmlFor="parent">Objet parent</StyledLabel>
      <StyledSelectBox>
        <StyledSelect id="parent">
          <option>salon</option>
        </StyledSelect>
      </StyledSelectBox>
    </StyledRow>
    <StyledRow $wide>
      <StyledLabel as="span">Catégorie</StyledLabel>
      <StyledChecks $gap={11}>
        {categories.map((name) => (
          <CheckField key={name} name={name} />
        ))}
      </StyledChecks>
    </StyledRow>
    <StyledRow $wide>
      <span />
      <StyledChecks $gap={14} $last>
        <CheckField name="Activer" defaultChecked />
        <CheckField name="Visible" defaultChecked />
      </StyledChecks>
    </StyledRow>
    <StyledTitle $indent>
      <FaListAlt size={17} />
      Configuration :
    </StyledTitle>
    <StyledRow>
      <StyledLabel htmlFor="mode">Mode de connection</StyledLabel>
      <StyledSelectBox>
        <StyledSelect id="mode">
          <option>tcpip</option>
        </StyledSelect>
      </StyledSelectBox>
    </StyledRow>
    <StyledPicture>
      <svg width="16" height="16" viewBox="0 0 16 16">
        <path d="M0 0h11l5 5v4l-9 7H0z" fill="#c3d5f3" />
        <path d="M.5 15.500V.5H11l4.500 4.500" fill="none" stroke="#a5a9ae" />
        <path d="M11 0v5h5z" fill="#f2f2f2" />
        <path d="M2 5q1-2 3-1 2-1 3 1z" fill="white" />
        <path d="M1 15q5-7 9-3l-3 3.500H1z" fill="#57a639" />
        <path d="M16 11v5h-5z" fill="#d2e4c8" />
      </svg>
    </StyledPicture>
    {tcpFields.map(({ id, label, value }) => (
      <StyledRow key={id}>
        <StyledLabel htmlFor={id}>{label}</StyledLabel>
        <StyledInput id={id} defaultValue={value} />
      </StyledRow>
    ))}
  </StyledPanel>
);

const Jeedom = () => (
  <StyledPage>
    <Navbar />
    <StyledTabsRow>
      <StyledPageTabs>
        <StyledPageTab $wide aria-label="Retour">
          <FaArrowCircleLeft size={14} />
        </StyledPageTab>
        <StyledPageTab $wide $active>
          <FaTachometerAlt size={16} />
          Equipement
        </StyledPageTab>
        <StyledPageTab>
          <FaListAlt size={14} />
          Commandes
        </StyledPageTab>
      </StyledPageTabs>
      <StyledActions>
        <StyledActionButton $kind="default" $right={7}>
          <FaCogs size={15} />
          Configuration avancée
        </StyledActionButton>
        <StyledActionButton $kind="default" $right={6}>
          <FaCopy size={12} />
          Dupliquer
        </StyledActionButton>
        <StyledActionButton $kind="success" $right={6}>
          <FaCheckCircle size={12} />
          Sauvegarder
        </StyledActionButton>
        <StyledActionButton $kind="danger" $right={8}>
          <FaMinusCircle size={12} />
          Supprimer
        </StyledActionButton>
      </StyledActions>
    </StyledTabsRow>
    <Equipment />
  </StyledPage>
);

const Taskbar = () => (
  <StyledTaskbar>
    <StyledStart aria-label="Démarrer">
      <svg width="16" height="16" viewBox="0 0 16 16" fill="white">
        <path d="m0 2.300 6.500-.9v6.100H0zM7.300 1.300 16 0v7.500H7.300zM0 8.400h6.500v6.200L0 13.700zM7.300 8.400H16V16l-8.700-1.300z" />
      </svg>
    </StyledStart>
    <StyledSearch>
      <Line size={16} box={16} width={1.3}>
        <circle cx="9.500" cy="6" r="5.200" />
        <path d="M6 10 .8 15.500" />
      </Line>
      <StyledSearchInput placeholder="Taper ici pour rechercher" />
    </StyledSearch>
    <StyledApp $wide aria-label="Cortana">
      <Line size={24} box={24} width={2.2}>
        <circle cx="12" cy="12" r="6.700" />
      </Line>
    </StyledApp>
    <StyledApp $wide aria-label="Affichage des tâches">
      <Line size={24} box={24}>
        <path d="M4.500 4v3.500h10V4M4.500 20v-3.500h10V20M4.500 9.500h10v5h-10zM18.500 4v3M18.500 12v8M17.500 8.500h2v2h-2z" />
      </Line>
    </StyledApp>
    <StyledApps>
      {apps.map((app) => (
        <StyledApp
          key={app.name}
          $open={app.open}
          $active={app.active}
          aria-label={app.name}
        >
          {app.icon ? (
            <svg width="24" height="24" viewBox="0 0 24 24">
              {app.icon}
            </svg>
          ) : (
            <OperaLogo size={24} />
          )}
        </StyledApp>
      ))}
    </StyledApps>
    <StyledTray>
      <Line size={16} box={16} width={1.3}>
        <path d="m3 10 5-5 5 5" />
      </Line>
      <Line size={16} box={16} width={1.2}>
        <path d="M3.500 4.500h7v7h-7zM10.500 7l2-1.500v5L10.500 9M5 2q3-2 5 0M5 14q3 2 5 0" />
      </Line>
      <Line size={16} box={16} width={1.2}>
        <path d="M.5 6H3l3-3v10l-3-3H.5zM8.500 6q1 2 0 4M10.500 4q3 4 0 8M12.500 2.500q5 5.500 0 11" />
      </Line>
      <svg width="16" height="16" viewBox="0 0 16 16" fill="none" stroke="white" strokeWidth="1.200">
        <path d="M6 5h8v7H4V9M14.500 7v3" />
        <path d="M7 6.500h5.500v4H6z" fill="white" />
        <path d="M1.500 1v3M4.500 1v3M.5 4h5v2q-2.500 3-5 0zM3 7v4" />
      </svg>
      <StyledDate>
        <div>15:10</div>
        <div>31/10/2022</div>
      </StyledDate>
      <StyledNotifications aria-label="Notifications">
        <svg width="26" height="26" viewBox="0 0 26 26">
          <path d="M1 1h15v12H8l-3 4v-4H1z" fill="white" />
          <path d="M3 4h10M3 7h10M3 10h6" stroke="#1b2b30" />
          <circle cx="15" cy="17" r="7.500" fill="#3b3f41" stroke="#a9adaf" />
          <text x="12" y="21" fontFamily="Open Sans" fontSize="11" fill="white">2</text>
        </svg>
      </StyledNotifications>
      <StyledDesktopEdge />
    </StyledTray>
  </StyledTaskbar>
);

const App = () => {
  return (
    <StyledDesktop>
      <GlobalStyle />
      <StyledBrowser>
        <Sidebar />
        <StyledWindow>
          <TabStrip />
          <AddressBar />
          <Bookmarks />
          <Jeedom />
        </StyledWindow>
      </StyledBrowser>
      <Taskbar />
    </StyledDesktop>
  );
};

export default App;
